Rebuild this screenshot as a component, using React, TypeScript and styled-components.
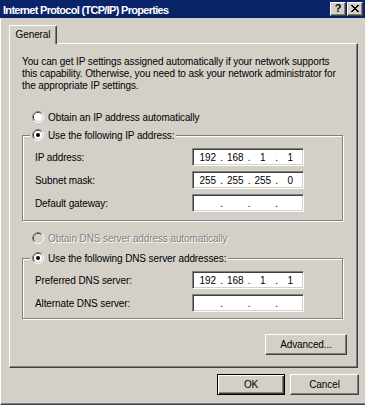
import React, { Fragment } from "react";
import styled, { createGlobalStyle } from "styled-components";

const FACE = "#D4D0C8";
const SHADOW = "#808080";
const DARK = "#404040";

const GlobalStyle = createGlobalStyle`
  html, body { margin: 0; padding: 0; background: ${FACE}; }
  body {
    font-family: "Liberation Sans", Arial, sans-serif;
    font-size: 10px;
    letter-spacing: -0.1px;
    color: #000;
  }
  #root { width: 365px; height: 405px; overflow: hidden; }
  * { box-sizing: border-box; }
`;

const Window = styled.div`
  width: 365px;
  height: 405px;
  display: flex;
  flex-direction: column;
  background: ${FACE};
`;

const TitleBar = styled.div`
  height: 18px;
  flex: none;
  display: flex;
  align-items: center;
  padding: 0 2px 0 3px;
  background: #0a246a;
  color: #fff;
  font-weight: bold;
  font-size: 11px;
`;

const TitleText = styled.div`
  flex: 1;
  white-space: nowrap;
  letter-spacing: -0.7px;
  padding-top: 1px;
`;

const CaptionButtons = styled.div`
  display: flex;
  gap: 1px;
`;

const CaptionButton = styled.div`
  width: 16px;
  height: 14px;
  display: flex;
  align-items: center;
  justify-content: center;
  background: ${FACE};
  border: 1px solid;
  border-color: #fff ${DARK} ${DARK} #fff;
  box-shadow: inset -1px -1px 0 ${SHADOW};
  color: #000;
  font-size: 11px;
  font-weight: bold;
  letter-spacing: 0;
  line-height: 1;
  padding-bottom: 1px;
`;

const Body = styled.div`
  flex: 1;
  display: flex;
  flex-direction: column;
  padding: 7px 7px 0 8px;
  border-left: 1px solid #fff;
  border-bottom: 1px solid ${DARK};
  box-shadow: inset 0 -1px 0 ${SHADOW};
`;

const TabStrip = styled.div`
  display: flex;
  height: 18px;
`;

const Tab = styled.div`
  position: relative;
  z-index: 1;
  width: 48px;
  height: 19px;
  display: flex;
  align-items: center;
  justify-content: center;
  background: ${FACE};
  border-top: 1px solid #fff;
  border-left: 1px solid #fff;
  border-right: 1px solid ${DARK};
  border-radius: 2px 2px 0 0;
  box-shadow: inset -1px 0 0 ${SHADOW};
  padding-bottom: 1px;
`;

const Panel = styled.div`
  height: 325px;
  display: flex;
  flex-direction: column;
  border: 1px solid;
  border-color: #fff ${DARK} ${DARK} #fff;
  box-shadow: inset -1px -1px 0 ${SHADOW};
  padding: 12px 14px 0 12px;
`;

const Intro = styled.p`
  margin: 0;
  line-height: 12px;
  white-space: nowrap;
`;

const OptionRow = styled.div<{ $top: number }>`
  display: flex;
  align-items: center;
  gap: 4px;
  height: 14px;
  margin: ${(p) => p.$top}px 0 0 10px;
`;

const OptionText = styled.span<{ $disabled?: boolean }>`
  white-space: nowrap;
  color: ${(p) => (p.$disabled ? SHADOW : "#000")};
  text-shadow: ${(p) => (p.$disabled ? "1px 1px 0 #fff" : "none")};
`;

const Group = styled.fieldset<{ $top: number }>`
  margin: ${(p) => p.$top}px 0 0 0;
  padding: 0;
  min-width: 0;
  border: 1px solid ${SHADOW};
  box-shadow: 1px 1px 0 #fff, inset 1px 1px 0 #fff;
`;

const GroupLegend = styled.legend`
  margin-left: 7px;
  padding: 0 2px;
  background: ${FACE};
`;

const LegendInner = styled.span`
  display: flex;
  align-items: center;
  gap: 4px;
  height: 14px;
`;

const Rows = styled.div<{ $bottom: number }>`
  display: flex;
  flex-direction: column;
  gap: 5px;
  padding: 6px 0 ${(p) => p.$bottom}px 12px;
`;

const Row = styled.div`
  display: flex;
  align-items: center;
`;

const RowLabel = styled.span`
  width: 157px;
  white-space: nowrap;
`;

const IpBox = styled.div`
  width: 112px;
  height: 18px;
  display: flex;
  align-items: center;
  padding: 0 1px 0 3px;
  background: #fff;
  border: 1px solid;
  border-color: ${SHADOW} #fff #fff ${SHADOW};
  box-shadow: inset 1px 1px 0 ${DARK}, inset -1px -1px 0 ${FACE};
`;

const Octet = styled.span`
  flex: 1;
  text-align: center;
`;

const Dot = styled.span`
  width: 4px;
  text-align: center;
`;

const AdvancedRow = styled.div`
  display: flex;
  justify-content: flex-end;
  margin: 15px -4px 0 0;
`;

const Button = styled.div<{ $w: number; $default?: boolean }>`
  width: ${(p) => p.$w}px;
  height: 21px;
  display: flex;
  align-items: center;
  justify-content: center;
  background: ${FACE};
  border: 1px solid;
  border-color: ${(p) => (p.$default ? "#000" : `#fff ${DARK} ${DARK} #fff`)};
  box-shadow: ${(p) =>
    p.$default
      ? `inset 1px 1px 0 #fff, inset -1px -1px 0 ${DARK}, inset -2px -2px 0 ${SHADOW}`
      : `inset -1px -1px 0 ${SHADOW}`};
`;

const DialogButtons = styled.div`
  display: flex;
  justify-content: flex-end;
  gap: 5px;
  margin: 6px -1px 0 0;
`;

const Radio = ({ checked, disabled }: { checked?: boolean; disabled?: boolean }) => (
  <svg width="12" height="12" viewBox="0 0 12 12" style={{ flex: "none" }}>
    <path d="M2.11 9.89 A5.5 5.5 0 0 1 9.89 2.11" fill="none" stroke={SHADOW} />
    <path d="M9.89 2.11 A5.5 5.5 0 0 1 2.11 9.89" fill="none" stroke="#fff" />
    <path d="M2.82 9.18 A4.5 4.5 0 0 1 9.18 2.82" fill="none" stroke={DARK} />
    <path d="M9.18 2.82 A4.5 4.5 0 0 1 2.82 9.18" fill="none" stroke={FACE} />
    <circle cx="6" cy="6" r="4" fill={disabled ? FACE : "#fff"} />
    {checked && <circle cx="6" cy="6" r="2" fill="#000" />}
  </svg>
);

const CloseGlyph = () => (
  <svg width="8" height="7" viewBox="0 0 8 7" shapeRendering="crispEdges">
    <path
      d="M0 0h2v1h-2z M6 0h2v1h-2z M1 1h2v1h-2z M5 1h2v1h-2z M2 2h4v1h-4z M3 3h2v1h-2z M2 4h4v1h-4z M1 5h2v1h-2z M5 5h2v1h-2z M0 6h2v1h-2z M6 6h2v1h-2z"
      fill="#000"
    />
  </svg>
);

const IpField = ({ value }: { value?: string[] }) => (
  <IpBox>
    {[0, 1, 2, 3].map((i) => (
      <Fragment key={i}>
        <Octet>{value ? value[i] : ""}</Octet>
        {i < 3 && <Dot>.</Dot>}
      </Fragment>
    ))}
  </IpBox>
);

const FieldRow = ({ label, value }: { label: string; value?: string[] }) => (
  <Row>
    <RowLabel>{label}</RowLabel>
    <IpField value={value} />
  </Row>
);

export default function App() {
  return (
    <>
      <GlobalStyle />
      <Window>
        <TitleBar>
          <TitleText>Internet Protocol (TCP/IP) Properties</TitleText>
          <CaptionButtons>
            <CaptionButton>?</CaptionButton>
            <CaptionButton>
              <CloseGlyph />
            </CaptionButton>
          </CaptionButtons>
        </TitleBar>
        <Body>
          <TabStrip>
            <Tab>General</Tab>
          </TabStrip>
          <Panel>
            <Intro>
              You can get IP settings assigned automatically if your network supports
              <br />
              this capability. Otherwise, you need to ask your network administrator for
              <br />
              the appropriate IP settings.
            </Intro>
            <OptionRow $top={18}>
              <Radio />
              <OptionText>Obtain an IP address automatically</OptionText>
            </OptionRow>
            <Group $top={4}>
              <GroupLegend>
                <LegendInner>
                  <Radio checked />
                  <OptionText>Use the following IP address:</OptionText>
                </LegendInner>
              </GroupLegend>
              <Rows $bottom={8}>
                <FieldRow label="IP address:" value={["192", "168", "1", "1"]} />
                <FieldRow label="Subnet mask:" value={["255", "255", "255", "0"]} />
                <FieldRow label="Default gateway:" />
              </Rows>
            </Group>
            <OptionRow $top={10}>
              <Radio disabled />
              <OptionText $disabled>Obtain DNS server address automatically</OptionText>
            </OptionRow>
            <Group $top={6}>
              <GroupLegend>
                <LegendInner>
                  <Radio checked />
                  <OptionText>Use the following DNS server addresses:</OptionText>
                </LegendInner>
              </GroupLegend>
              <Rows $bottom={6}>
                <FieldRow label="Preferred DNS server:" value={["192", "168", "1", "1"]} />
                <FieldRow label="Alternate DNS server:" />
              </Rows>
            </Group>
            <AdvancedRow>
              <Button $w={82}>Advanced...</Button>
            </AdvancedRow>
          </Panel>
          <DialogButtons>
            <Button $w={68} $default>
              OK
            </Button>
            <Button $w={69}>Cancel</Button>
          </DialogButtons>
        </Body>
      </Window>
    </>
  );
}
